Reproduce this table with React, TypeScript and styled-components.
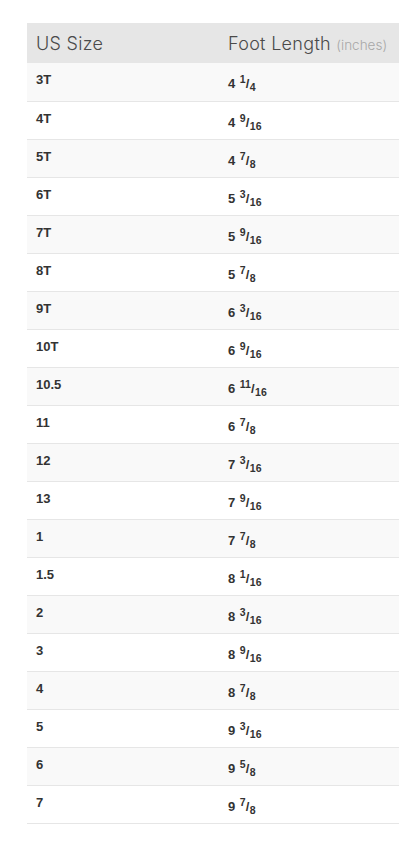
import React from "react";
import styled, { createGlobalStyle } from "styled-components";

type Size = {
  us: string;
  whole: number;
  num: number;
  den: number;
};

const sizes: Size[] = [
  { us: "3T", whole: 4, num: 1, den: 4 },
  { us: "4T", whole: 4, num: 9, den: 16 },
  { us: "5T", whole: 4, num: 7, den: 8 },
  { us: "6T", whole: 5, num: 3, den: 16 },
  { us: "7T", whole: 5, num: 9, den: 16 },
  { us: "8T", whole: 5, num: 7, den: 8 },
  { us: "9T", whole: 6, num: 3, den: 16 },
  { us: "10T", whole: 6, num: 9, den: 16 },
  { us: "10.5", whole: 6, num: 11, den: 16 },
  { us: "11", whole: 6, num: 7, den: 8 },
  { us: "12", whole: 7, num: 3, den: 16 },
  { us: "13", whole: 7, num: 9, den: 16 },
  { us: "1", whole: 7, num: 7, den: 8 },
  { us: "1.5", whole: 8, num: 1, den: 16 },
  { us: "2", whole: 8, num: 3, den: 16 },
  { us: "3", whole: 8, num: 9, den: 16 },
  { us: "4", whole: 8, num: 7, den: 8 },
  { us: "5", whole: 9, num: 3, den: 16 },
  { us: "6", whole: 9, num: 5, den: 8 },
  { us: "7", whole: 9, num: 7, den: 8 },
];

const App: React.FC = () => {
  return (
    <>
      <GlobalStyle />
      <Page>
        <SizeTable>
          <thead>
            <tr>
              <HeadCell>US Size</HeadCell>
              <HeadCell>
                Foot Length <Unit>(inches)</Unit>
              </HeadCell>
            </tr>
          </thead>
          <tbody>
            {sizes.map((s, i) => (
              <Row key={s.us} striped={i % 2 === 0}>
                <SizeCell>{s.us}</SizeCell>
                <LengthCell>
                  {s.whole} <Num>{s.num}</Num>/<Den>{s.den}</Den>
                </LengthCell>
              </Row>
            ))}
          </tbody>
        </SizeTable>
      </Page>
    </>
  );
};

export default App;

const GlobalStyle = createGlobalStyle`
  body {
    margin: 0;
    background: #ffffff;
    font-family: "Liberation Sans", Arial, sans-serif;
  }
`;

const Page = styled.div`
  padding: 23px 20px 0 27px;
`;

const SizeTable = styled.table`
  width: 372px;
  border-collapse: collapse;
  border-spacing: 0;
`;

const HeadCell = styled.th`
  background: #e6e6e6;
  height: 40px;
  padding: 0 9px;
  text-align: left;
  font-family: Inter, "Liberation Sans", sans-serif;
  font-weight: 300;
  font-size: 18px;
  letter-spacing: 0.3px;
  color: #4a4a4a;
  vertical-align: middle;
  white-space: nowrap;

  &:first-child {
    width: 174px;
  }
`;

const Unit = styled.span`
  font-size: 13.5px;
  letter-spacing: 0;
  color: #a8a8a8;
`;

type RowProps = {
  striped: boolean;
};

const Row = styled.tr<RowProps>`
  background: ${(props) => (props.striped ? "#f9f9f9" : "#ffffff")};
  border-bottom: 1px solid #e6e6e6;
`;

const SizeCell = styled.td`
  height: 38px;
  box-sizing: border-box;
  padding: 9px 9px 0;
  vertical-align: top;
  font-size: 13px;
  font-weight: bold;
  color: #333333;
  line-height: 16px;
`;

const LengthCell = styled(SizeCell)`
  padding-top: 13px;
`;

const Num = styled.sup`
  font-size: 10.5px;
  line-height: 0;
  vertical-align: 5px;
  margin-left: 1px;
`;

const Den = styled.sub`
  font-size: 10.5px;
  line-height: 0;
  vertical-align: -3px;
  margin-left: 0.5px;
`;
